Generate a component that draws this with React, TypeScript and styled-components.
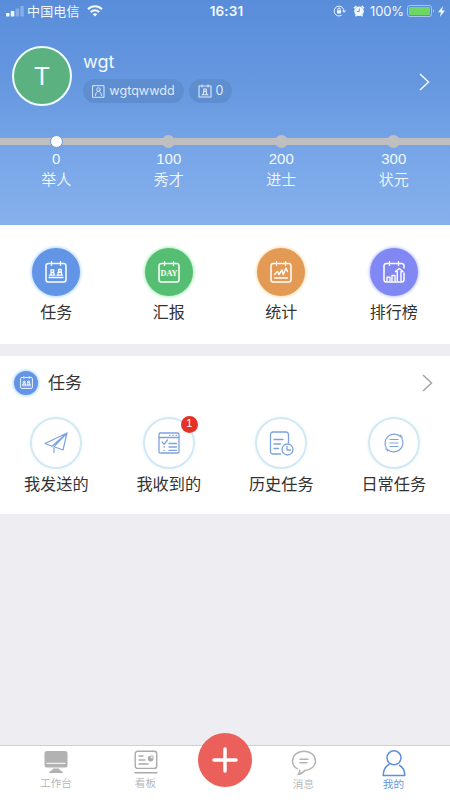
import React from 'react';
import styled, { createGlobalStyle, css } from 'styled-components';

const GlobalStyle = createGlobalStyle`
  * { box-sizing: border-box; }
  body {
    margin: 0;
    background: #eeeef2;
    font-family: Inter, "Noto Sans CJK SC", sans-serif;
    color: #333;
  }
  svg { display: block; flex: none; }
`;

const Screen = styled.div`
  width: 450px;
  height: 800px;
  display: flex;
  flex-direction: column;
  overflow: hidden;
  background: #eeeef2;
`;

const Header = styled.header`
  height: 225px;
  flex: none;
  color: #f1f9ff;
  background: linear-gradient(#598dda 0%, #6698e0 38%, #78a6e8 70%, #87b1ed 100%);
`;

const StatusBar = styled.div`
  height: 22px;
  display: grid;
  grid-template-columns: 1fr auto 1fr;
  align-items: center;
  padding: 0 5px 0 6px;
  font-size: 13px;
  line-height: 20px;
`;

const StatusGroup = styled.div<{ $end?: boolean }>`
  display: flex;
  align-items: center;
  justify-content: ${p => (p.$end ? 'flex-end' : 'flex-start')};
`;

const Carrier = styled.span`
  margin: 0 7px 0 3px;
  font-size: 13px;
  letter-spacing: 0.15px;
`;

const Clock = styled.span`
  padding-left: 2px;
  font-weight: 600;
  font-size: 13.5px;
  letter-spacing: 0.1px;
`;

const AlarmSlot = styled.span`
  margin: 0 5px 0 7px;
`;

const Percent = styled.span`
  margin-right: 3px;
  font-size: 13px;
  letter-spacing: -0.1px;
`;

const Profile = styled.div`
  height: 60px;
  margin-top: 24px;
  padding: 0 20px 0 12px;
  display: flex;
  align-items: center;
`;

const ProfileArrow = styled.div`
  padding-top: 11px;
`;

const Avatar = styled.div`
  width: 60px;
  height: 60px;
  flex: none;
  border: 2px solid #f2fdff;
  border-radius: 50%;
  background: #5bb17f;
  display: flex;
  align-items: center;
  justify-content: center;
  font-family: "Liberation Sans", sans-serif;
  font-size: 26px;
`;

const Identity = styled.div`
  flex: 1;
  height: 60px;
  padding-left: 11px;
`;

const Name = styled.div`
  height: 33px;
  padding-top: 1px;
  font-size: 18px;
  line-height: 29px;
`;

const Pills = styled.div`
  display: flex;
  gap: 5px;
`;

const Pill = styled.div<{ $width: number }>`
  width: ${p => p.$width}px;
  height: 24px;
  border-radius: 12px;
  background: #5e8dd0;
  display: flex;
  align-items: center;
  justify-content: center;
  gap: 4px;
  font-size: 12.600px;
  line-height: 24px;
  color: #dcecff;
  white-space: nowrap;
`;

const FourColumns = styled.div`
  display: grid;
  grid-template-columns: repeat(4, 1fr);
`;

const Levels = styled(FourColumns)`
  margin-top: 29px;
`;

const Level = styled.div`
  display: flex;
  flex-direction: column;
  align-items: center;
  font-size: 14.5px;
  line-height: 20px;
`;

const Track = styled.div`
  width: 100%;
  height: 13px;
  display: flex;
  align-items: center;
  justify-content: center;
  background: linear-gradient(transparent 3px, #bfbfbf 3px, #bfbfbf 10px, transparent 10px);
`;

const Stop = styled.span<{ $active?: boolean }>`
  width: 13px;
  height: 13px;
  border-radius: 50%;
  background: #bfbfbf;
  ${p => p.$active && css`
    background: #fff;
    border: 1px solid #6796dc;
  `}
`;

const Score = styled.span`
  margin-top: 1px;
  font-family: "Liberation Sans", sans-serif;
  font-size: 15px;
`;

const LevelName = styled.span`
  margin-top: 1px;
  font-size: 15px;
  font-weight: 350;
`;

const Shortcuts = styled(FourColumns)`
  height: 119px;
  flex: none;
  padding-top: 23px;
  background: #fff;
`;

const Item = styled.div`
  display: flex;
  flex-direction: column;
  align-items: center;
  font-size: 16px;
  line-height: 24px;
`;

const Disc = styled.div<{ $color: string; $glow: string; $size?: number }>`
  width: ${p => p.$size ?? 48}px;
  height: ${p => p.$size ?? 48}px;
  flex: none;
  border-radius: 50%;
  display: flex;
  align-items: center;
  justify-content: center;
  color: #fff;
  background: ${p => p.$color};
  box-shadow: 0 0 3px 1px ${p => p.$glow};
`;

const ShortcutLabel = styled.span`
  margin-top: 4px;
`;

const TaskCard = styled.section`
  height: 158px;
  flex: none;
  margin-top: 12px;
  background: #fff;
`;

const TaskTitle = styled.div`
  height: 53px;
  padding: 0 17px 0 14px;
  display: flex;
  align-items: center;
  font-size: 17px;
`;

const TitleText = styled.span`
  flex: 1;
  margin-left: 10px;
  padding-bottom: 2px;
`;

const Ring = styled.div`
  position: relative;
  width: 52px;
  height: 52px;
  margin-top: 8px;
  border: 2px solid #d3e8f3;
  border-radius: 50%;
  box-shadow: 0 0 4px #e6f7ff;
  display: flex;
  align-items: center;
  justify-content: center;
  color: #7da3de;
`;

const Badge = styled.span`
  position: absolute;
  top: -3px;
  right: -5px;
  width: 17px;
  height: 17px;
  border-radius: 50%;
  background: #e43326;
  color: #fff;
  font: 11px/15px "Liberation Sans", sans-serif;
  text-align: center;
`;

const TaskLabel = styled.span`
  margin-top: 3px;
  font-size: 16.2px;
`;

const TabBar = styled.nav`
  height: 55px;
  flex: none;
  margin-top: auto;
  display: grid;
  grid-template-columns: 112px 67px 91px 67px 113px;
  background: #fff;
  border-top: 1px solid #cfcfd1;
`;

const Tab = styled.div<{ $active?: boolean }>`
  display: flex;
  flex-direction: column;
  align-items: center;
  padding-top: 4px;
  color: ${p => (p.$active ? '#608fd9' : '#b4b4b4')};
  font-size: 10.7px;
  line-height: 14px;
`;

const TabLabel = styled.span<{ $drop: number }>`
  margin-top: ${p => p.$drop}px;
  font-weight: 350;
`;

const AddButton = styled.div`
  width: 54px;
  height: 54px;
  margin: -13px auto 0;
  border-radius: 50%;
  background: #ec605c;
  display: flex;
  align-items: center;
  justify-content: center;
  color: #fff;
`;

type StrokeProps = { size: number; box?: number; width?: number; children: React.ReactNode };

const Stroke = ({ size, box = 22, width = 1.5, children }: StrokeProps) => (
  <svg width={size} height={size} viewBox={`0 0 ${box} ${box}`} fill="none" stroke="currentColor"
    strokeWidth={width} strokeLinecap="round" strokeLinejoin="round">{children}</svg>
);

const CalendarFrame = () => (
  <path d="M5 2.5H3.2A2.2 2.2 0 0 0 1 4.700V18.800A2.200 2.200 0 0 0 3.200 21H18.800A2.200 2.200 0 0 0 21 18.800V4.700A2.200 2.200 0 0 0 18.800 2.500H17M8 2.500H14M6.500 .8V4.200M15.500 .8V4.200" />
);

const TaskIcon = ({ size = 22 }: { size?: number }) => (
  <Stroke size={size}>
    <CalendarFrame />
    <path d="M4 16.500H18M4.300 14.200H9.800M12 14.200H17.500M5.500 14L6.300 11.500H8.500L9.300 14M6 8.800H8.700V11.300H6ZM13 14V11.300H16.500V14M13.500 8.500H16.200V11H13.500Z" strokeWidth="1.300" />
  </Stroke>
);

const ReportIcon = () => (
  <Stroke size={22}>
    <CalendarFrame />
    <text x="11" y="15.200" textAnchor="middle" textLength="17" lengthAdjust="spacingAndGlyphs" fontFamily="Liberation Serif"
      fontWeight="700" fontSize="8.500" fill="currentColor" stroke="none">DAY</text>
  </Stroke>
);

const StatsIcon = () => (
  <Stroke size={22}>
    <CalendarFrame />
    <path d="M4.500 13.500L7.500 10.500L9 13.500L12 9L13.200 13.500L16 7L17.500 10.500M4.500 17H17.500" strokeWidth="1.400" />
  </Stroke>
);

const RankIcon = () => (
  <Stroke size={22}>
    <path d="M5 2.500H3.200A2.200 2.200 0 0 0 1 4.700V18.800A2.200 2.200 0 0 0 3.200 21H18.800A2.200 2.200 0 0 0 21 18.800V12M8 2.500H14M17 2.500H18.800A2.200 2.200 0 0 1 21 4.700V7M6.500 .8V4.200M15.500 .8V4.200" />
    <path d="M4 20V16.300H7V20M9 20V14.500H12V20M14.300 20V10.500H12.500L16.200 7.500L20 10.500H18V20" strokeWidth="1.400" />
  </Stroke>
);

const PlaneIcon = () => (
  <Stroke size={24} box={24} width={1.2}>
    <path d="M23 2L1 12.500L8 15.200L23 2L19 19L11.500 16.200M23 2L10 15.700V21.500" />
  </Stroke>
);

const ReceivedIcon = () => (
  <Stroke size={22} width={1.3}>
    <rect x="1" y="1" width="20" height="20" rx="1.300" />
    <path d="M1 5.500H21M11.500 3.300H12M14.800 3.300H15.300M18 3.300H18.500M4 10L6.300 12.200L9.500 8M11 11.500H18.500M11 15H18.500M11 18.300H18.500M6 15H6.500M6 18.300H6.500" />
  </Stroke>
);

const HistoryIcon = () => (
  <Stroke size={25} box={25} width={1.3}>
    <path d="M11.500 23H4A2.500 2.500 0 0 1 1.500 20.500V3.500A2.500 2.500 0 0 1 4 1H17A2.500 2.500 0 0 1 19.500 3.500V12M5 8.500H14M5 13H11.500M5 17.500H9.500" />
    <circle cx="18.500" cy="18.500" r="5.500" />
    <path d="M18 15.300V19H21.500" />
  </Stroke>
);

const DailyIcon = () => (
  <Stroke size={22} width={1.2}>
    <path d="M3.200 15.700A9.200 9.200 0 0 1 17.500 4.500M18.800 6.300A9.200 9.200 0 0 1 4.500 17.500M17.800 3V5H19.500M4.200 19V17H2.500M7 7.500H15M7 11H15M7 14.500H15" />
  </Stroke>
);

const PersonBadgeIcon = () => (
  <Stroke size={13} box={13} width={1}>
    <rect x="1" y=".7" width="11" height="11.600" />
    <circle cx="6.500" cy="4.500" r="1.800" />
    <path d="M3.500 10.500C3.500 8 5 6.500 6.500 6.500S9.500 8 9.500 10.500" />
  </Stroke>
);

const MedalIcon = () => (
  <Stroke size={14} box={14} width={1.1}>
    <path d="M4.500 2H1V13H13V2H9.500M4 .7V3M10 .7V3M5.500 2H8.500M4 10.700H10M5 10.500L6 7.500H8L9 10.500M5.700 5H8.300V7.200H5.700Z" />
  </Stroke>
);

const Chevron = ({ color }: { color: string }) => (
  <svg width="11" height="18" viewBox="0 0 11 18" fill="none" stroke={color} strokeWidth="1.500">
    <path d="M1 1L9.500 9L1 17" />
  </svg>
);

const SignalIcon = () => (
  <svg width="18" height="12" viewBox="0 0 18 12" fill="currentColor">
    <rect x="0" y="8" width="3.500" height="3.500" rx=".6" />
    <rect x="4.800" y="6" width="3.500" height="5.500" rx=".6" />
    <rect x="9.600" y="3.500" width="3.500" height="8" rx=".6" opacity=".3" />
    <rect x="14.300" y="1" width="3.500" height="10.500" rx=".6" opacity=".3" />
  </svg>
);

const WifiIcon = () => (
  <svg width="16" height="12" viewBox="0 0 16 12" fill="none" stroke="currentColor" strokeWidth="2">
    <path d="M1 4.200C5 .2 11 .2 15 4.200M3.700 7.100C6.200 4.600 9.800 4.600 12.300 7.100" />
    <path d="M8 11.500L5.700 9.200C7 7.900 9 7.900 10.300 9.200Z" fill="currentColor" stroke="none" />
  </svg>
);

const RotationLockIcon = () => (
  <svg width="13" height="12" viewBox="0 0 13 12" fill="none" stroke="currentColor">
    <path d="M8.500 10.300A4.900 4.900 0 1 1 10.900 6.800M9.300 5.500L11 7.300L12.500 5.500" />
    <rect x="4" y="5.300" width="4" height="3.200" fill="currentColor" stroke="none" />
    <path d="M4.800 5.500V4.200A1.200 1.200 0 0 1 7.200 4.200V5.500" />
  </svg>
);

const AlarmIcon = () => (
  <svg width="12" height="12" viewBox="0 0 12 12" fill="currentColor">
    <circle cx="6" cy="6.300" r="4.800" />
    <path d="M1 3.300L3.300 1M8.700 1L11 3.300M2.500 11.300L3.700 10M9.500 11.300L8.300 10" stroke="currentColor" strokeWidth="1.500" />
    <path d="M6.300 3.500V6.500H3.800" stroke="#598dda" strokeWidth=".9" fill="none" />
  </svg>
);

const BatteryIcon = () => (
  <svg width="28" height="12" viewBox="0 0 28 12" fill="none">
    <rect x=".5" y=".5" width="24" height="11" rx="2.300" stroke="#a9c8f1" />
    <rect x="2" y="2" width="21" height="8" rx="1" fill="#6dd665" />
    <path d="M26 4Q28 6 26 8Z" fill="#a9c8f1" />
  </svg>
);

const BoltIcon = () => (
  <svg width="7" height="11" viewBox="0 0 7 11" fill="currentColor">
    <path d="M5 0L0 6.200H3L1.800 11L7 4.500H4Z" />
  </svg>
);

const Battery = styled.span`
  display: flex;
  align-items: center;
  gap: 3px;
`;

const MonitorIcon = () => (
  <svg width="24" height="24" viewBox="0 0 24 24" fill="#b2b2b2">
    <rect x=".5" y="1" width="23" height="16.500" rx="2.500" />
    <path d="M2.500 13.300H21.500" stroke="#fff" />
    <path d="M9 18.500H15L16 20.500Q19 21 19 23H5Q5 21 8 20.500Z" />
  </svg>
);

const BoardIcon = () => (
  <svg width="24" height="24" viewBox="0 0 24 24" fill="none" stroke="#aaa" strokeWidth="1.400" strokeLinecap="round">
    <rect x="1.200" y="1.200" width="21.500" height="17.200" rx="2.500" />
    <path d="M5 6H9M5 10H11M5 14H14M1 22.700H23" />
    <path d="M16.700 8.500V6A2.600 2.600 0 1 0 19.200 8.500Z" fill="#aaa" strokeWidth=".6" />
    <path d="M18 5V7H20" strokeWidth=".8" />
  </svg>
);

const MessageIcon = () => (
  <svg width="26" height="26" viewBox="0 0 26 26" fill="none" stroke="#b4b4b4" strokeWidth="1.500" strokeLinecap="round">
    <path d="M6.500 18.800C3.500 17.200 1.500 14.400 1.500 11C1.500 5.500 6.500 1.200 13 1.200S24.500 5.500 24.500 11C24.500 16 19.800 20.300 13.700 20.500C12.300 22.500 10 24 7.500 24.300C8.500 23 8.900 21.800 8.700 20.200M9 9.200H17M9 12.800H16" />
  </svg>
);

const MineIcon = () => (
  <svg width="24" height="27" viewBox="0 0 24 27" fill="none" stroke="#608fd9" strokeWidth="1.500" strokeLinejoin="round">
    <circle cx="12" cy="7.800" r="7" />
    <path d="M7.500 14C3.800 16 1.200 19.800 1.200 25.500H22.800C22.800 20.500 20.800 17 17 15" />
  </svg>
);

const levels = [
  { score: 0, name: '举人' },
  { score: 100, name: '秀才' },
  { score: 200, name: '进士' },
  { score: 300, name: '状元' },
];

const shortcuts = [
  { label: '任务', color: '#6395e7', glow: '#b0d5ff', icon: <TaskIcon /> },
  { label: '汇报', color: '#56be72', glow: '#a4efb8', icon: <ReportIcon /> },
  { label: '统计', color: '#e39a54', glow: '#ffdcae', icon: <StatsIcon /> },
  { label: '排行榜', color: '#8288f3', glow: '#c0c7ff', icon: <RankIcon /> },
];

const tasks = [
  { label: '我发送的', icon: <PlaneIcon /> },
  { label: '我收到的', icon: <ReceivedIcon />, badge: 1 },
  { label: '历史任务', icon: <HistoryIcon /> },
  { label: '日常任务', icon: <DailyIcon /> },
];

export default function App() {
  return (
    <Screen>
      <GlobalStyle />
      <Header>
        <StatusBar>
          <StatusGroup>
            <SignalIcon />
            <Carrier>中国电信</Carrier>
            <WifiIcon />
          </StatusGroup>
          <Clock>16:31</Clock>
          <StatusGroup $end>
            <RotationLockIcon />
            <AlarmSlot><AlarmIcon /></AlarmSlot>
            <Percent>100%</Percent>
            <Battery><BatteryIcon /><BoltIcon /></Battery>
          </StatusGroup>
        </StatusBar>
        <Profile>
          <Avatar>T</Avatar>
          <Identity>
            <Name>wgt</Name>
            <Pills>
              <Pill $width={101}><PersonBadgeIcon />wgtqwwdd</Pill>
              <Pill $width={43}><MedalIcon />0</Pill>
            </Pills>
          </Identity>
          <ProfileArrow><Chevron color="#f1f9ff" /></ProfileArrow>
        </Profile>
        <Levels>
          {levels.map((level, i) => (
            <Level key={level.name}>
              <Track><Stop $active={i === 0} /></Track>
              <Score>{level.score}</Score>
              <LevelName>{level.name}</LevelName>
            </Level>
          ))}
        </Levels>
      </Header>
      <Shortcuts>
        {shortcuts.map(item => (
          <Item key={item.label}>
            <Disc $color={item.color} $glow={item.glow}>{item.icon}</Disc>
            <ShortcutLabel>{item.label}</ShortcutLabel>
          </Item>
        ))}
      </Shortcuts>
      <TaskCard>
        <TaskTitle>
          <Disc $size={24} $color="#6395e7" $glow="#b0d5ff"><TaskIcon size={13} /></Disc>
          <TitleText>任务</TitleText>
          <Chevron color="#a5a5a5" />
        </TaskTitle>
        <FourColumns>
          {tasks.map(task => (
            <Item key={task.label}>
              <Ring>{task.icon}{task.badge && <Badge>{task.badge}</Badge>}</Ring>
              <TaskLabel>{task.label}</TaskLabel>
            </Item>
          ))}
        </FourColumns>
      </TaskCard>
      <TabBar>
        <Tab><MonitorIcon /><TabLabel $drop={3}>工作台</TabLabel></Tab>
        <Tab><BoardIcon /><TabLabel $drop={3}>看板</TabLabel></Tab>
        <AddButton>
          <Stroke size={26} box={26} width={3.5}><path d="M13 2V24M2 13H24" /></Stroke>
        </AddButton>
        <Tab><MessageIcon /><TabLabel $drop={2}>消息</TabLabel></Tab>
        <Tab $active><MineIcon /><TabLabel $drop={1}>我的</TabLabel></Tab>
      </TabBar>
    </Screen>
  );
}
